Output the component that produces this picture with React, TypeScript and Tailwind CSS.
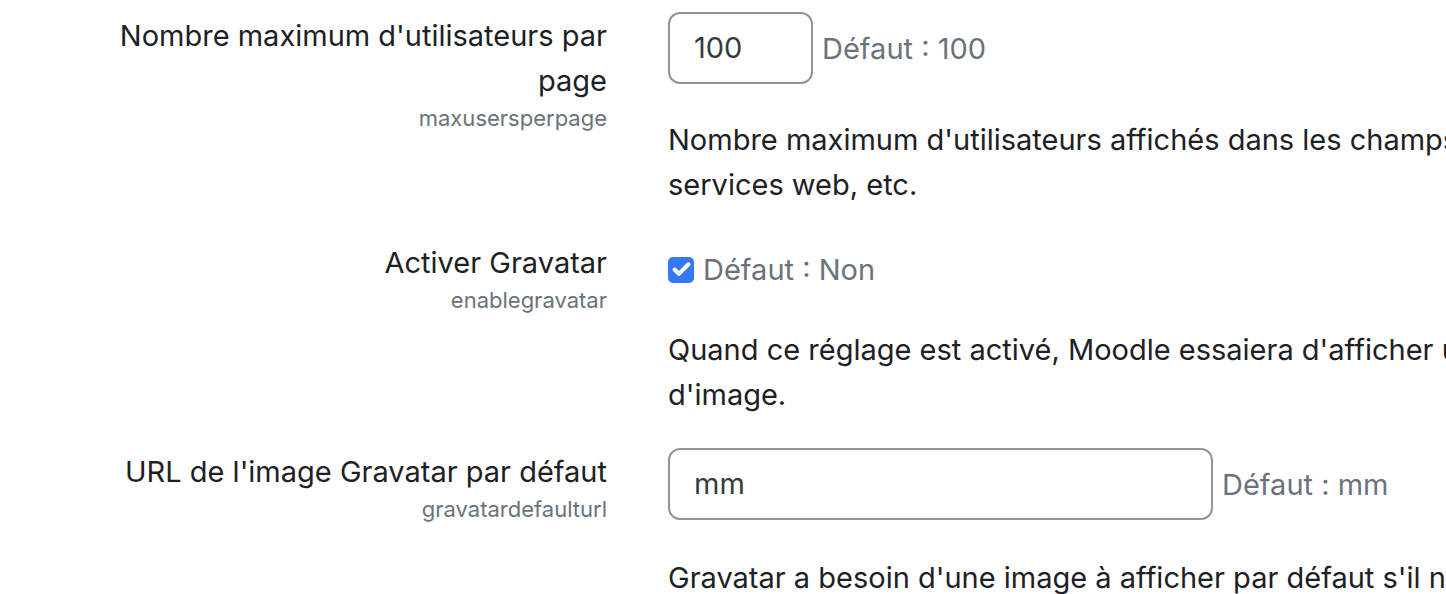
import { Check } from 'lucide-react'

type Setting = {
  label: string[]
  name: string
}

function Label({ setting }: { setting: Setting }) {
  return (
    <div className="w-[607px] shrink-0 text-right">
      <div className="pt-[1px] text-[29px] leading-[45px] text-[#1d2125]">
        {setting.label.map((line) => (
          <div key={line}>{line}</div>
        ))}
      </div>
      <div className="text-[22px] leading-[30px] text-[#6a737b]">{setting.name}</div>
    </div>
  )
}

function Description({ lines, className }: { lines: string[]; className: string }) {
  return (
    <div className={`whitespace-nowrap text-[29px] leading-[45px] text-[#1d2125] ${className}`}>
      {lines.map((line) => (
        <div key={line}>{line}</div>
      ))}
    </div>
  )
}

export default function App() {
  return (
    <div
      className="h-[594px] w-[1446px] overflow-hidden bg-white"
      style={{ fontFamily: 'Inter, "Noto Sans", sans-serif' }}
    >
      {/* maxusersperpage */}
      <div className="flex pt-[12px]">
        <Label setting={{ label: ["Nombre maximum d'utilisateurs par", 'page'], name: 'maxusersperpage' }} />
        <div className="ml-[61px]">
          <div className="flex items-center">
            <div className="flex h-[72px] w-[145px] items-center rounded-[12px] border-2 border-[#8f959e] px-[24px] text-[29px] text-[#343a40]">
              100
            </div>
            <span className="ml-[9px] pt-[2px] text-[29px] text-[#6a737b]">Défaut : 100</span>
          </div>
          <Description
            className="mt-[33px]"
            lines={[
              "Nombre maximum d'utilisateurs affichés dans les champs de sélection d'utilisateurs, les",
              'services web, etc.',
            ]}
          />
        </div>
      </div>

      {/* enablegravatar */}
      <div className="mt-[32px] flex">
        <Label setting={{ label: ['Activer Gravatar'], name: 'enablegravatar' }} />
        <div className="ml-[61px] pt-[8px]">
          <div className="flex h-[45px] items-center">
            <span className="flex h-[26px] w-[26px] items-center justify-center rounded-[5px] bg-[#3478f6]">
              <Check className="h-[21px] w-[21px] text-white" strokeWidth={4.5} />
            </span>
            <span className="ml-[9px] text-[29px] text-[#6a737b]">Défaut : Non</span>
          </div>
          <Description
            className="mt-[35px]"
            lines={[
              "Quand ce réglage est activé, Moodle essaiera d'afficher une image Gravatar pour les utilisateurs qui n'ont pas déposé",
              "d'image.",
            ]}
          />
        </div>
      </div>

      {/* gravatardefaulturl */}
      <div className="mt-[31px] flex">
        <Label setting={{ label: ["URL de l'image Gravatar par défaut"], name: 'gravatardefaulturl' }} />
        <div className="ml-[61px]">
          <div className="flex items-center">
            <div className="flex h-[72px] w-[545px] items-center rounded-[12px] border-2 border-[#8f959e] px-[24px] text-[29px] text-[#343a40]">
              mm
            </div>
            <span className="ml-[9px] pt-[2px] text-[29px] text-[#6a737b]">Défaut : mm</span>
          </div>
          <Description
            className="mt-[35px]"
            lines={["Gravatar a besoin d'une image à afficher par défaut s'il n'en trouve pas pour un utilisateur."]}
          />
        </div>
      </div>
    </div>
  )
}
